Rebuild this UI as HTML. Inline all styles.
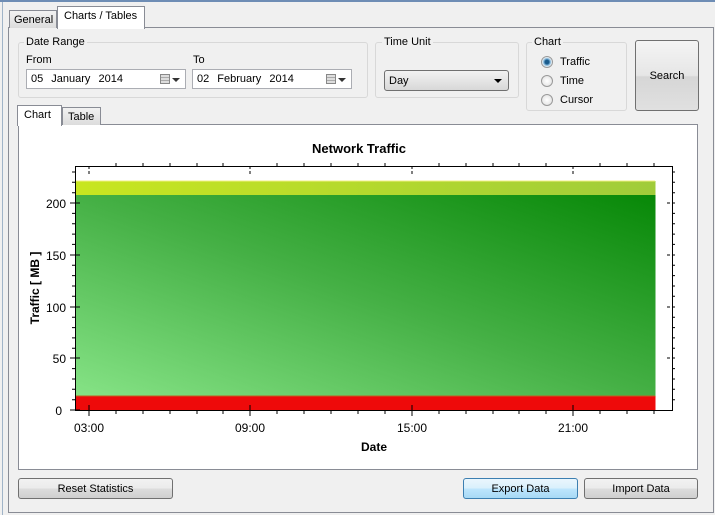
<!DOCTYPE html>
<html><head><style>
*{box-sizing:border-box;margin:0;padding:0}
body{width:715px;height:515px;background:#f0f0f0;font-family:"Liberation Sans",sans-serif;font-size:11px;color:#000;position:relative;overflow:hidden}
.a{position:absolute}
.grp{position:absolute;border:1px solid #d8d8d8;border-radius:3px}
.lbl{position:absolute;background:#f0f0f0;padding:0 2px;font-size:11px}
.btn{position:absolute;border:1px solid #707070;border-radius:3px;background:linear-gradient(#f2f2f2 0%,#ebebeb 50%,#dddddd 50%,#cfcfcf 100%);text-align:center;font-size:11px}
.dt{position:absolute;background:#fff;border:1px solid #abadb3;height:20px;font-size:11px;padding:3px 4px;word-spacing:5px}
.cal{position:absolute;right:4px;top:4px;width:10px;height:10px;border:1px solid #888;background:repeating-linear-gradient(#ddd 0 2px,#aaa 2px 3px)}
.arr{position:absolute;width:0;height:0;border-left:4px solid transparent;border-right:4px solid transparent;border-top:4px solid #333}
.rad{position:absolute;width:12px;height:12px;border-radius:50%;border:1px solid #999;background:radial-gradient(#fff,#ddd)}
</style></head><body>
<div class="a" style="left:0;top:0;width:715px;height:2px;background:#6e8db5"></div>
<div class="a" style="left:2px;top:2px;width:1px;height:513px;background:#a0b4c8"></div>
<div class="a" style="left:8px;top:27px;width:706px;height:486px;border:1px solid #898c95;background:#fff"></div>
<div class="a" style="left:9px;top:28px;width:704px;height:484px;background:#f0f0f0"></div>
<div class="a" style="left:9px;top:10px;width:48px;height:18px;border:1px solid #898c95;border-bottom:none;background:linear-gradient(#f2f2f2,#dcdcdc);padding:3px 4px;font-size:11px">General</div>
<div class="a" style="left:57px;top:6px;width:88px;height:23px;border:1px solid #898c95;border-bottom:none;background:#fff;padding:3px 6px;font-size:11px">Charts / Tables</div>

<div class="grp" style="left:18px;top:42px;width:350px;height:56px"></div>
<div class="lbl" style="left:24px;top:36px">Date Range</div>
<div class="a" style="left:26px;top:54px">From</div>
<div class="a" style="left:193px;top:54px">To</div>
<div class="dt" style="left:26px;top:69px;width:160px">05 January 2014<div class="cal" style="right:15px"></div><div class="arr" style="right:5px;top:8px"></div></div>
<div class="dt" style="left:192px;top:69px;width:160px">02 February 2014<div class="cal" style="right:15px"></div><div class="arr" style="right:5px;top:8px"></div></div>

<div class="grp" style="left:375px;top:42px;width:144px;height:56px"></div>
<div class="lbl" style="left:382px;top:36px">Time Unit</div>
<div class="a" style="left:384px;top:70px;width:125px;height:21px;border:1px solid #707070;border-radius:3px;background:linear-gradient(#f2f2f2,#d8d8d8);padding:4px 4px">Day<div class="arr" style="right:6px;top:8px;border-top-color:#000"></div></div>

<div class="grp" style="left:526px;top:42px;width:101px;height:69px"></div>
<div class="lbl" style="left:532px;top:36px">Chart</div>
<div class="rad" style="left:541px;top:56px;background:radial-gradient(#1a5b8c 0 2px,#6fa8d0 3px,#fff 5px)"></div>
<div class="a" style="left:560px;top:56px">Traffic</div>
<div class="rad" style="left:541px;top:75px"></div>
<div class="a" style="left:560px;top:75px">Time</div>
<div class="rad" style="left:541px;top:94px"></div>
<div class="a" style="left:560px;top:94px">Cursor</div>

<div class="btn" style="left:635px;top:40px;width:64px;height:71px;padding-top:29px;background:linear-gradient(#f4f4f4 0%,#e6e6e6 50%,#d6d6d6 52%,#e0e0e0 100%)">Search</div>

<div class="a" style="left:18px;top:124px;width:680px;height:346px;border:1px solid #898c95;background:#fff"></div>
<div class="a" style="left:17px;top:105px;width:45px;height:21px;border:1px solid #898c95;border-bottom:none;background:#fff;padding:3px 6px">Chart</div>
<div class="a" style="left:62px;top:107px;width:39px;height:18px;border:1px solid #898c95;border-bottom:none;background:linear-gradient(#f2f2f2,#dcdcdc);padding:3px 5px">Table</div>

<svg class="a" style="left:0;top:0" width="715" height="515">
<defs>
<linearGradient id="g" x1="0" y1="1" x2="1" y2="0">
<stop offset="0" stop-color="#86e386"/><stop offset="0.5" stop-color="#45b045"/><stop offset="1" stop-color="#078807"/></linearGradient>
<linearGradient id="y" x1="0" y1="0" x2="1" y2="0"><stop offset="0" stop-color="#c8e620"/><stop offset="1" stop-color="#a0cc3a"/></linearGradient>
</defs>
<text x="359" y="153" font-size="13" font-weight="bold" text-anchor="middle" font-family="Liberation Sans">Network Traffic</text>
<rect x="75.5" y="181" width="580" height="15" fill="url(#y)"/>
<line x1="75.5" y1="181" x2="655" y2="181" stroke="#f0f080"/>
<rect x="75.5" y="195" width="580" height="202" fill="url(#g)"/>
<rect x="75.5" y="396" width="580" height="14" fill="#ee0a0a"/>
<line x1="75.5" y1="396" x2="655" y2="396" stroke="#c06020"/>
<rect x="75.5" y="166.5" width="597" height="244" fill="none" stroke="#000"/>
<g stroke="#000">
<line x1="70" y1="203" x2="80" y2="203"/><line x1="70" y1="255" x2="80" y2="255"/><line x1="70" y1="307" x2="80" y2="307"/><line x1="70" y1="358" x2="80" y2="358"/><line x1="70" y1="410" x2="80" y2="410"/>
<line x1="667" y1="203" x2="677" y2="203" stroke-dasharray="3,2"/><line x1="667" y1="255" x2="677" y2="255" stroke-dasharray="3,2"/><line x1="667" y1="307" x2="677" y2="307" stroke-dasharray="3,2"/><line x1="667" y1="358" x2="677" y2="358" stroke-dasharray="3,2"/>
<line x1="89" y1="405" x2="89" y2="416"/><line x1="250" y1="405" x2="250" y2="416"/><line x1="412" y1="405" x2="412" y2="416"/><line x1="573" y1="405" x2="573" y2="416"/>
<line x1="89" y1="166" x2="89" y2="176" stroke-dasharray="3,2"/><line x1="250" y1="166" x2="250" y2="176" stroke-dasharray="3,2"/><line x1="412" y1="166" x2="412" y2="176" stroke-dasharray="3,2"/><line x1="573" y1="166" x2="573" y2="176" stroke-dasharray="3,2"/>
</g>
<g stroke="#000" id="minor">
<path d="M72 213.4h3M72 223.7h3M72 234.1h3M72 244.4h3M72 265.3h3M72 275.6h3M72 286h3M72 296.3h3M72 317.3h3M72 327.6h3M72 337.9h3M72 348.3h3M72 368.6h3M72 379h3M72 389.3h3M72 399.7h3M72 192.7h3M72 182.3h3M72 172h3"/>
<path d="M672 213.4h3M672 223.7h3M672 234.1h3M672 244.4h3M672 265.3h3M672 275.6h3M672 286h3M672 296.3h3M672 317.3h3M672 327.6h3M672 337.9h3M672 348.3h3M672 368.6h3M672 379h3M672 389.3h3M672 399.7h3M672 192.7h3M672 182.3h3M672 172h3"/>
<path d="M116 410v4M143 410v4M170 410v4M197 410v4M223 410v4M277 410v4M304 410v4M331 410v4M358 410v4M385 410v4M439 410v4M466 410v4M493 410v4M519 410v4M546 410v4M600 410v4M627 410v4M654 410v4"/>
<path d="M116 163v3M143 163v3M170 163v3M197 163v3M223 163v3M277 163v3M304 163v3M331 163v3M358 163v3M385 163v3M439 163v3M466 163v3M493 163v3M519 163v3M546 163v3M600 163v3M627 163v3M654 163v3"/>
</g>
<g font-size="12" font-family="Liberation Sans" text-anchor="end">
<text x="66" y="208">200</text><text x="66" y="260">150</text><text x="66" y="312">100</text><text x="66" y="363">50</text><text x="62" y="415">0</text>
</g>
<g font-size="12" font-family="Liberation Sans" text-anchor="middle">
<text x="89" y="432">03:00</text><text x="250" y="432">09:00</text><text x="412" y="432">15:00</text><text x="573" y="432">21:00</text>
</g>
<text x="374" y="451" font-size="12" font-weight="bold" text-anchor="middle" font-family="Liberation Sans">Date</text>
<text transform="translate(39,288) rotate(-90)" font-size="12" font-weight="bold" text-anchor="middle" font-family="Liberation Sans">Traffic [ MB ]</text>
</svg>

<div class="btn" style="left:18px;top:478px;width:155px;height:21px;padding-top:4px">Reset Statistics</div>
<div class="btn" style="left:463px;top:478px;width:115px;height:21px;padding-top:4px;border-color:#3c7fb1;background:linear-gradient(#eaf6fd 0%,#d9f0fc 50%,#bee6fd 50%,#a7d9f5 100%)">Export Data</div>
<div class="btn" style="left:584px;top:478px;width:114px;height:21px;padding-top:4px">Import Data</div>
</body></html>
